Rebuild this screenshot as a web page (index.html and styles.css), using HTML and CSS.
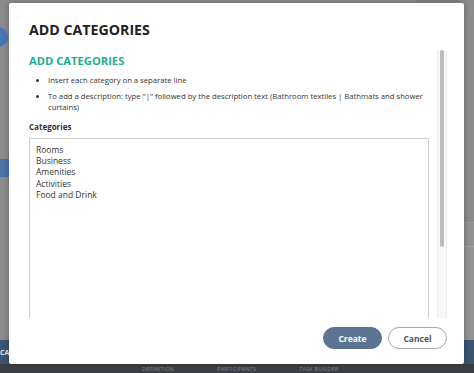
FILE: index.html
```html
<!DOCTYPE html>
<html lang="en">
<head>
    <meta charset="UTF-8">
    <meta name="viewport" content="width=device-width, initial-scale=1.0">
    <title>Add Categories</title>
    <link rel="stylesheet" href="styles.css">
</head>
<body>
    <div class="page">
        <div class="topbar"><span class="topbar-link"></span></div>

        <div class="main">
            <div class="sidebar">
                <div class="avatar"></div>
                <div class="side-tab"></div>
            </div>
            <div class="content">
                <div class="content-row"></div>
                <div class="content-row light"></div>
            </div>
        </div>

        <div class="action-bar"><span class="action-label">CA</span></div>

        <nav class="bottom-nav">
            <span>DEFINITION</span>
            <span>PARTICIPANTS</span>
            <span>TASK BUILDER</span>
        </nav>
    </div>

    <!-- Модальное окно поверх страницы -->
    <div class="modal">
        <h2 class="modal-title">ADD CATEGORIES</h2>

        <div class="modal-body">
            <div class="scroll-content">
                <h3 class="section-title">ADD CATEGORIES</h3>
                <ul class="hints">
                    <li>Insert each category on a separate line</li>
                    <li>To add a description: type "|" followed by the description text (Bathroom textiles | Bathmats and shower curtains)</li>
                </ul>
                <label class="field-label" for="categories">Categories</label>
                <textarea id="categories" class="categories-input">Rooms
Business
Amenities
Activities
Food and Drink</textarea>
            </div>
            <!-- Полоса прокрутки -->
            <div class="scrollbar">
                <div class="scrollbar-thumb"></div>
            </div>
        </div>

        <div class="modal-footer">
            <button class="btn btn-primary">Create</button>
            <button class="btn btn-secondary">Cancel</button>
        </div>
    </div>
</body>
</html>
```

FILE: styles.css
```css
* {
    box-sizing: border-box;
}

body {
    margin: 0;
    font-family: 'Open Sans', 'Liberation Sans', sans-serif;
    width: 474px;
    height: 373px;
    overflow: hidden;
    position: relative;
}

/* Страница под затемнением */
.page {
    height: 373px;
    display: flex;
    flex-direction: column;
    background-color: #8c8c8c;
}

.topbar {
    height: 3px;
    display: flex;
    justify-content: flex-end;
}

.topbar-link {
    width: 44px;
    height: 2px;
    margin-right: 14px;
    background-color: #7f8285;
}

.main {
    flex: 1;
    display: flex;
}

.sidebar {
    width: 9px;
    overflow: hidden;
}

.avatar {
    width: 20px;
    height: 20px;
    border-radius: 50%;
    background-color: #4a78b6;
    margin: 24px 0 0 -12px;
}

.side-tab {
    width: 9px;
    height: 18px;
    margin-top: 112px;
    background-color: #4d73a6;
}

.content {
    flex: 1;
    display: flex;
    flex-direction: column;
    padding-top: 219px;
}

.content-row {
    height: 24px;
    border-top: 1px solid #9a9a9a;
    background-color: #929292;
}

.content-row.light {
    flex: 1;
    background-color: #949494;
    border-top: 1px solid #a2a2a2;
}

.action-bar {
    height: 24px;
    background-color: #3b5570;
    display: flex;
    align-items: center;
}

.action-label {
    color: #e6ebf0;
    font-size: 7px;
    font-weight: 700;
}

.bottom-nav {
    height: 9px;
    background-color: #3b3f43;
    display: flex;
    align-items: flex-end;
    gap: 43px;
    padding-left: 142px;
    overflow: hidden;
}

.bottom-nav span {
    font-size: 5.5px;
    line-height: 7px;
    letter-spacing: 0.2px;
    color: #848a90;
}

/* Модальное окно */
.modal {
    position: absolute;
    top: 3px;
    left: 9px;
    width: 455px;
    height: 361px;
    background-color: #FFF;
    border-radius: 2px;
    box-shadow: 0 0 6px rgba(0, 0, 0, 0.3);
    display: flex;
    flex-direction: column;
}

.modal-title {
    margin: 0;
    padding: 17px 20px 10px;
    font-size: 14.2px;
    line-height: 20px;
    font-weight: 700;
    color: #222;
}

.modal-body {
    height: 268px;
    margin-left: 20px;
    display: flex;
    gap: 8px;
    overflow: hidden;
}

.scroll-content {
    width: 400px;
    padding-top: 4px;
}

.scrollbar {
    width: 10px;
    padding: 0 2px;
    background-color: #f8f8f8;
    border-left: 1px solid #ececec;
    border-right: 1px solid #ececec;
}

.scrollbar-thumb {
    height: 197px;
    border-radius: 3px;
    background-color: #bcbcbc;
}

.section-title {
    margin: 0;
    font-size: 11.2px;
    line-height: 14px;
    font-weight: 700;
    color: #1eae89;
}

.hints {
    margin: 7px 0 0;
    padding-left: 19px;
    font-size: 7.7px;
    line-height: 11px;
    color: #333;
}

.hints li + li {
    margin-top: 5px;
}

.field-label {
    display: block;
    margin-top: 8px;
    font-size: 8px;
    line-height: 11px;
    font-weight: 700;
    color: #333;
}

.categories-input {
    display: block;
    margin-top: 6px;
    width: 400px;
    height: 270px;
    padding: 5px 6px;
    border: 1px solid #cfcfcf;
    border-radius: 0;
    resize: none;
    font-family: 'Open Sans', 'Liberation Sans', sans-serif;
    font-size: 8.5px;
    line-height: 11.2px;
    color: #333;
    outline: none;
}

.modal-footer {
    display: flex;
    justify-content: flex-end;
    gap: 6px;
    padding: 9px 17px 0;
}

.btn {
    width: 59px;
    height: 22px;
    border-radius: 11px;
    font-family: 'Open Sans', 'Liberation Sans', sans-serif;
    font-size: 8.5px;
    font-weight: 700;
    cursor: pointer;
}

.btn-primary {
    background-color: #5a7491;
    border: 1px solid #5a7491;
    color: #FFF;
}

.btn-secondary {
    background-color: #FFF;
    border: 1px solid #a8a8a8;
    color: #4a5866;
}
```
